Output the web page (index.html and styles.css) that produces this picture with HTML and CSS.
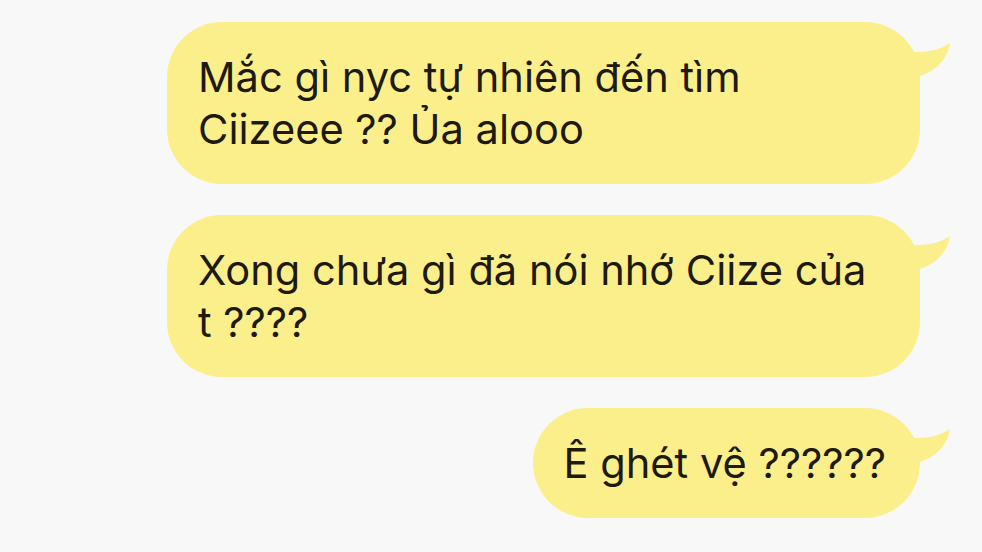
FILE: index.html
```html
<!DOCTYPE html>
<html lang="vi">
<head>
<meta charset="utf-8">
<link rel="stylesheet" href="styles.css">
</head>
<body>
<div class="chat">
  <div class="bubble">
    <p class="text">Mắc gì nyc tự nhiên đến tìm Ciizeee ?? Ủa alooo</p>
    <svg class="tail" width="51" height="38" viewBox="0 0 51 38"><path d="M0 12 L12 12 Q36 13 50 3 Q46 27 20 36 L0 36 Z"/></svg>
  </div>
  <div class="bubble">
    <p class="text">Xong chưa gì đã nói nhớ Ciize của t ????</p>
    <svg class="tail" width="51" height="38" viewBox="0 0 51 38"><path d="M0 12 L12 12 Q36 13 50 3 Q46 27 20 36 L0 36 Z"/></svg>
  </div>
  <div class="bubble">
    <p class="text">Ê ghét vệ ??????</p>
    <svg class="tail" width="51" height="38" viewBox="0 0 51 38"><path d="M0 12 L12 12 Q36 13 50 3 Q46 27 20 36 L0 36 Z"/></svg>
  </div>
</div>
</body>
</html>
```

FILE: styles.css
```css
html, body {
  margin: 0;
  padding: 0;
  background: #f8f8f8;
  height: 100%;
  overflow: hidden;
}

.chat {
  display: flex;
  flex-direction: column;
  align-items: flex-end;
  gap: 31px;
  padding: 22px 62px 0 0;
}

.bubble {
  position: relative;
  max-width: 753px;
  box-sizing: border-box;
  background: #fbef8c;
  border-radius: 55px;
  padding: 29px 34px 29px 31px;
}

.text {
  margin: 0;
  font-family: Inter, "Noto Sans", sans-serif;
  font-size: 41.6px;
  line-height: 52px;
  color: #1e1a0d;
}

.tail {
  position: absolute;
  right: -31px;
  top: 18px;
  fill: #fbef8c;
}
```
